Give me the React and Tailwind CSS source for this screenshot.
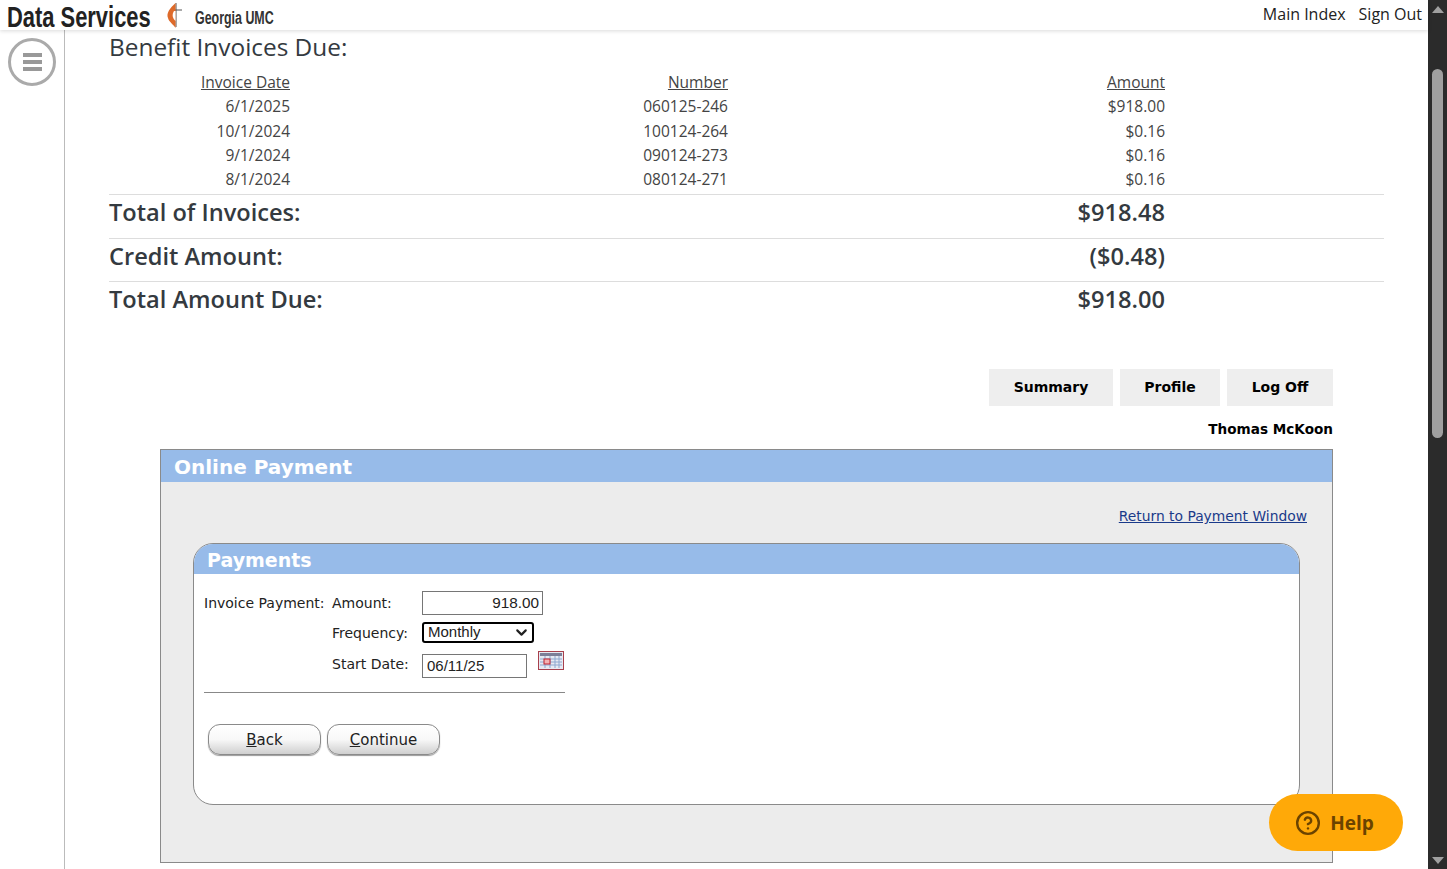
import { ChevronDown, CircleHelp } from 'lucide-react';

const invoices = [
  { date: '6/1/2025', number: '060125-246', amount: '$918.00' },
  { date: '10/1/2024', number: '100124-264', amount: '$0.16' },
  { date: '9/1/2024', number: '090124-273', amount: '$0.16' },
  { date: '8/1/2024', number: '080124-271', amount: '$0.16' },
];

const totals = [
  { label: 'Total of Invoices:', value: '$918.48' },
  { label: 'Credit Amount:', value: '($0.48)' },
  { label: 'Total Amount Due:', value: '$918.00' },
];

const segoe = "font-['Open_Sans',sans-serif]";
const verdana = "font-['DejaVu_Sans',sans-serif]";
const arial = "font-['Liberation_Sans',sans-serif]";

const Logo = () => (
  <svg width="16" height="26" viewBox="0 0 16 26" className="mx-[13px] flex-none">
    <path d="M10 1 V25" stroke="#555" strokeWidth="1" />
    <path d="M5 8 H16" stroke="#555" strokeWidth="1" />
    <path d="M9.5 1 C4 6 0 11 2 16 C3 20 7 22 9.5 26 Z" fill="#de6a2a" />
    <path d="M8 9 C6 12 6 16 9.5 19 V9 Z" fill="#fff" />
  </svg>
);

const CalendarIcon = () => (
  <svg width="26" height="19" viewBox="0 0 26 19" className="block">
    <rect x="0.5" y="0.5" width="25" height="18" fill="#e6e9f2" stroke="#a8404c" />
    <rect x="2" y="2" width="22" height="3" fill="#7c7f98" />
    <path d="M2 8 H24 M2 11 H24 M2 14 H24 M7 5 V17 M12 5 V17 M17 5 V17 M21 5 V17" stroke="#8ea8d0" strokeWidth="1" />
    <rect x="6" y="8" width="6" height="5" fill="#f3b3b3" stroke="#c0202e" />
  </svg>
);

const PillButton = ({ hotkey, rest }) => (
  <button className={`h-[31px] w-[113px] rounded-[12px] border border-[#8a8a8a] bg-gradient-to-b from-white via-[#f8f8f8] to-[#cfcfcf] pt-[2px] text-[15px] text-[#222] shadow-[0_1px_1px_#999] ${verdana}`}>
    <span className="underline">{hotkey}</span>{rest}
  </button>
);

const App = () => {
  return (
    <div className="relative flex h-[869px] w-[1447px] overflow-hidden bg-white">
      <div className="flex min-w-0 flex-1 flex-col">
        {/* Header */}
        <header className="z-10 flex h-[30px] flex-none items-center justify-between bg-white pl-[7px] pr-[6px] shadow-[0_1px_4px_rgba(0,0,0,0.15)]">
          <div className="flex items-center">
            <span className={`w-[146px] origin-left scale-x-[0.73] whitespace-nowrap pt-[3px] text-[30px] leading-[27px] font-bold text-[#222] ${arial}`}>Data Services</span>
            <Logo />
            <span className={`origin-left scale-x-[0.69] whitespace-nowrap pt-[6px] text-[18px] leading-[24px] font-bold text-[#333] ${arial}`}>Georgia UMC</span>
          </div>
          <nav className={`flex gap-[13px] pb-[3px] text-[16px] font-medium text-[#222] ${segoe}`}>
            <span>Main Index</span>
            <span>Sign Out</span>
          </nav>
        </header>

        <div className="flex min-h-0 flex-1">
          {/* Sidebar */}
          <aside className="w-[65px] flex-none border-r border-[#bbb] pl-[8px] pt-[8px]">
            <div className="flex h-[48px] w-[48px] flex-col items-center justify-center gap-[3px] rounded-full border-[3px] border-[#aaa]">
              <span className="h-[4px] w-[19px] bg-[#999]" />
              <span className="h-[4px] w-[19px] bg-[#999]" />
              <span className="h-[4px] w-[19px] bg-[#999]" />
            </div>
          </aside>

          {/* Content */}
          <main className="min-w-0 flex-1 pl-[44px] pr-[44px]">
            <h1 className={`text-[24.4px] leading-[33px] font-medium text-[#343a40] ${segoe}`}>Benefit Invoices Due:</h1>

            <div className={`mt-[7px] pb-[3px] text-[15.5px] leading-[24.3px] text-[#444] ${segoe}`}>
              <div className="grid grid-cols-[181px_438px_437px] text-right">
                <span className="underline">Invoice Date</span>
                <span className="underline">Number</span>
                <span className="underline">Amount</span>
              </div>
              {invoices.map((row) => (
                <div key={row.number} className="grid grid-cols-[181px_438px_437px] text-right">
                  <span>{row.date}</span>
                  <span>{row.number}</span>
                  <span>{row.amount}</span>
                </div>
              ))}
            </div>

            <div className={`text-[23.6px] font-[560] text-[#343a40] ${segoe}`}>
              {totals.map((row) => (
                <div key={row.label} className="grid h-[43.5px] grid-cols-[1056px_1fr] border-t border-[#ddd] leading-[34px]">
                  <div className="flex justify-between">
                    <span>{row.label}</span>
                    <span>{row.value}</span>
                  </div>
                </div>
              ))}
            </div>

            {/* Online payment panel */}
            <div className="ml-[51px] w-[1173px]">
              <div className={`mt-[44px] flex justify-end gap-[7px] text-[14px] font-bold text-black ${verdana}`}>
                <button className="h-[37px] w-[124px] bg-[#eee] pt-[1px]">Summary</button>
                <button className="h-[37px] w-[100px] bg-[#eee] pt-[1px]">Profile</button>
                <button className="h-[37px] w-[106px] bg-[#eee] pt-[1px]">Log Off</button>
              </div>
              <div className={`mt-[14px] text-right text-[13.6px] leading-[18px] font-bold text-black ${verdana}`}>Thomas McKoon</div>

              <section className="mt-[11px] h-[414px] border border-[#8a8a8a] bg-[#ececec]">
                <h2 className={`h-[32px] bg-[#97bbe9] pl-[13px] text-[20px] leading-[34px] font-bold text-white ${verdana}`}>Online Payment</h2>
                <div className={`mr-[25px] mt-[26px] text-right text-[13.85px] leading-[17px] text-[#1a3a8a] underline ${verdana}`}>Return to Payment Window</div>

                <div className="ml-[32px] mr-[32px] mt-[18px] h-[262px] overflow-hidden rounded-[20px] border border-[#8a8a8a] bg-white">
                  <h3 className={`h-[30px] bg-[#97bbe9] pl-[13px] text-[19px] leading-[32px] font-bold text-white ${verdana}`}>Payments</h3>

                  <div className={`ml-[10px] mt-[17px] w-[361px] text-[14px] text-[#222] ${verdana}`}>
                    <div className="flex h-[31px] items-start">
                      <span className="w-[128px] leading-[24px]">Invoice Payment:</span>
                      <span className="w-[90px] leading-[24px]">Amount:</span>
                      <input readOnly value="918.00" className={`h-[24px] w-[121px] border border-[#767676] px-[3px] text-right text-[15.3px] text-[#222] ${arial}`} />
                    </div>
                    <div className="flex h-[30px] items-start pl-[128px]">
                      <span className="w-[90px] leading-[23px]">Frequency:</span>
                      <div className={`flex h-[21px] w-[112px] items-center justify-between rounded-[3px] border-2 border-black pl-[4px] pr-[2px] text-[15px] text-[#222] ${arial}`}>
                        <span>Monthly</span>
                        <ChevronDown size={17} strokeWidth={3} />
                      </div>
                    </div>
                    <div className="flex h-[40px] items-start pl-[128px]">
                      <span className="w-[90px] leading-[24px]">Start Date:</span>
                      <input readOnly value="06/11/25" className={`mt-[2px] h-[24px] w-[105px] border border-[#767676] px-[4px] text-[15px] text-[#222] ${arial}`} />
                      <span className="ml-[11px] mt-[-1px]"><CalendarIcon /></span>
                    </div>
                    <div className="border-t border-[#888]" />
                    <div className="ml-[4px] mt-[31px] flex gap-[6px]">
                      <PillButton hotkey="B" rest="ack" />
                      <PillButton hotkey="C" rest="ontinue" />
                    </div>
                  </div>
                </div>
              </section>
            </div>
          </main>
        </div>
      </div>

      {/* Scrollbar */}
      <div className="relative flex w-[19px] flex-none flex-col items-center bg-[#2b2b2b]">
        <div className="mt-[6px] h-0 w-0 border-x-[6px] border-b-[7px] border-x-transparent border-b-[#a0a0a0]" />
        <div className="mt-[56px] h-[369px] w-[11px] rounded-full bg-[#a0a0a0]" />
        <div className="mt-auto mb-[5px] h-0 w-0 border-x-[6px] border-t-[7px] border-x-transparent border-t-[#a0a0a0]" />
      </div>

      {/* Help button */}
      <button className={`absolute left-[1269px] top-[794px] flex h-[57px] w-[134px] items-center justify-center gap-[9px] rounded-full bg-[#ffa908] pl-[2px] pt-[1px] text-[19px] font-bold text-[#6b4300] ${segoe}`}>
        <CircleHelp size={26} strokeWidth={2.2} className="ml-[-5px]" />
        Help
      </button>
    </div>
  );
};

export default App;
